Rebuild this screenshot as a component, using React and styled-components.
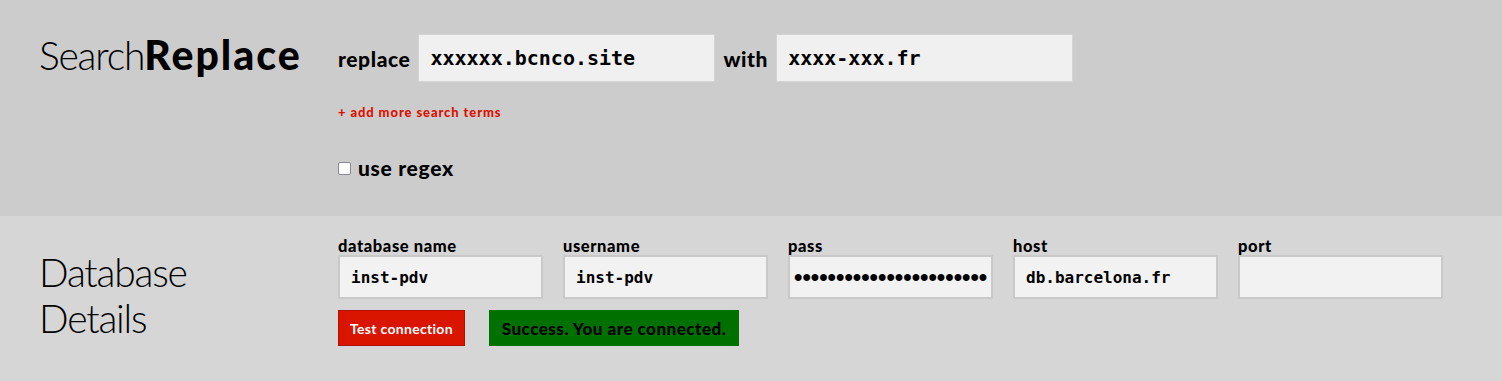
import React, { useState } from "react";
import styled, { createGlobalStyle } from "styled-components";

const GlobalStyle = createGlobalStyle`
  html, body {
    margin: 0;
    padding: 0;
    background: #d6d6d6;
  }
  body {
    font-family: Lato, "Open Sans", sans-serif;
    color: #000;
  }
`;

const App = () => {
  const [form, setForm] = useState({
    search: "xxxxxx.bcnco.site",
    replace: "xxxx-xxx.fr",
    regex: false,
    name: "inst-pdv",
    user: "inst-pdv",
    pass: "xxxxxxxxxxxxxxxxxxxxxxxxx",
    host: "db.barcelona.fr",
    port: "",
  });

  const onChange = (name, value) => {
    setForm({ ...form, [name]: value });
  };

  const dbFields = [
    { key: "name", label: "database name" },
    { key: "user", label: "username" },
    { key: "pass", label: "pass", type: "password" },
    { key: "host", label: "host" },
    { key: "port", label: "port" },
  ];

  return (
    <>
      <GlobalStyle />
      <Section $bg="#cccccc" $height={216} $top={34}>
        <Heading $offset={-2}>
          Search<strong>Replace</strong>
        </Heading>
        <Content>
          <TermRow>
            <Label>replace</Label>
            <TermInput
              value={form.search}
              onChange={(e) => onChange("search", e.target.value)}
            />
            <Label>with</Label>
            <TermInput
              value={form.replace}
              onChange={(e) => onChange("replace", e.target.value)}
            />
          </TermRow>
          <AddMore href="#">+ add more search terms</AddMore>
          <CheckLabel>
            <Check
              type="checkbox"
              checked={form.regex}
              onChange={(e) => onChange("regex", e.target.checked)}
            />
            use regex
          </CheckLabel>
        </Content>
      </Section>
      <Section $bg="#d6d6d6" $height={165} $top={22}>
        <Heading as="h2" $offset={11}>
          Database
          <br />
          Details
        </Heading>
        <Content>
          <FieldGrid>
            {dbFields.map((f) => (
              <Field key={f.key}>
                <SmallLabel>{f.label}</SmallLabel>
                <DbInput
                  type={f.type || "text"}
                  $dots={f.type === "password"}
                  value={form[f.key]}
                  onChange={(e) => onChange(f.key, e.target.value)}
                />
              </Field>
            ))}
          </FieldGrid>
          <ActionRow>
            <TestButton>Test connection</TestButton>
            <Status>Success. You are connected.</Status>
          </ActionRow>
        </Content>
      </Section>
    </>
  );
};

const Section = styled.section`
  display: flex;
  box-sizing: border-box;
  height: ${(p) => p.$height}px;
  background: ${(p) => p.$bg};
  padding-top: ${(p) => p.$top}px;
`;

const Heading = styled.h1`
  width: 299px;
  flex-shrink: 0;
  margin: ${(p) => p.$offset}px 0 0 39px;
  font-family: Lato, "Open Sans", sans-serif;
  font-weight: 300;
  font-size: 39px;
  line-height: 46px;
  letter-spacing: -1.2px;
  white-space: nowrap;
  strong {
    font-weight: 900;
    font-size: 41px;
    letter-spacing: 2px;
  }
`;

const Content = styled.div`
  display: flex;
  flex-direction: column;
  align-items: flex-start;
`;

const TermRow = styled.div`
  display: flex;
  align-items: center;
  gap: 8px;
`;

const Label = styled.span`
  font-size: 21px;
  font-weight: 900;
  letter-spacing: 0.6px;
`;

const TermInput = styled.input`
  box-sizing: border-box;
  width: 297px;
  height: 48px;
  padding: 0 11px;
  border: 1px solid #d4d4d4;
  background: #f0f0f0;
  font-family: "DejaVu Sans Mono", monospace;
  font-weight: bold;
  font-size: 20px;
  color: #000;
  outline: none;
`;

const AddMore = styled.a`
  margin-top: 22px;
  font-size: 13px;
  font-weight: 900;
  letter-spacing: 0.9px;
  color: #dd1100;
  text-decoration: none;
`;

const CheckLabel = styled.label`
  display: flex;
  align-items: center;
  gap: 7px;
  margin-top: 35px;
  font-size: 21px;
  font-weight: 900;
  letter-spacing: 0.7px;
`;

const Check = styled.input`
  appearance: none;
  box-sizing: border-box;
  width: 13px;
  height: 13px;
  margin: 2px 0 0 0;
  border: 1px solid #8a8694;
  border-radius: 2px;
  background: #fff;
`;

const FieldGrid = styled.div`
  display: grid;
  grid-template-columns: repeat(5, 205px);
  column-gap: 20px;
`;

const Field = styled.div`
  display: flex;
  flex-direction: column;
`;

const SmallLabel = styled.span`
  font-size: 16.5px;
  font-weight: 900;
  line-height: 17px;
  letter-spacing: 0.6px;
`;

const DbInput = styled.input`
  box-sizing: border-box;
  width: 205px;
  height: 44px;
  padding: 0 ${(p) => (p.$dots ? 4 : 11)}px;
  border: 2px solid #c9c9c9;
  background: #f2f2f2;
  font-family: ${(p) =>
    p.$dots ? '"Liberation Sans", sans-serif' : '"DejaVu Sans Mono", monospace'};
  font-weight: bold;
  font-size: ${(p) => (p.$dots ? 24 : 16)}px;
  color: #000;
  outline: none;
`;

const ActionRow = styled.div`
  display: flex;
  align-items: center;
  gap: 24px;
  margin-top: 11px;
`;

const TestButton = styled.button`
  box-sizing: border-box;
  width: 127px;
  height: 36px;
  padding: 0;
  background: #d91500;
  border: 1px solid #b01000;
  color: #fff;
  font-family: Lato, "Open Sans", sans-serif;
  font-size: 14px;
  font-weight: 700;
  letter-spacing: 0.3px;
  cursor: pointer;
`;

const Status = styled.div`
  box-sizing: border-box;
  width: 250px;
  height: 36px;
  display: flex;
  align-items: center;
  justify-content: center;
  background: #007000;
  color: #000;
  font-size: 17px;
  font-weight: 900;
  letter-spacing: 0.5px;
`;

export default App;
